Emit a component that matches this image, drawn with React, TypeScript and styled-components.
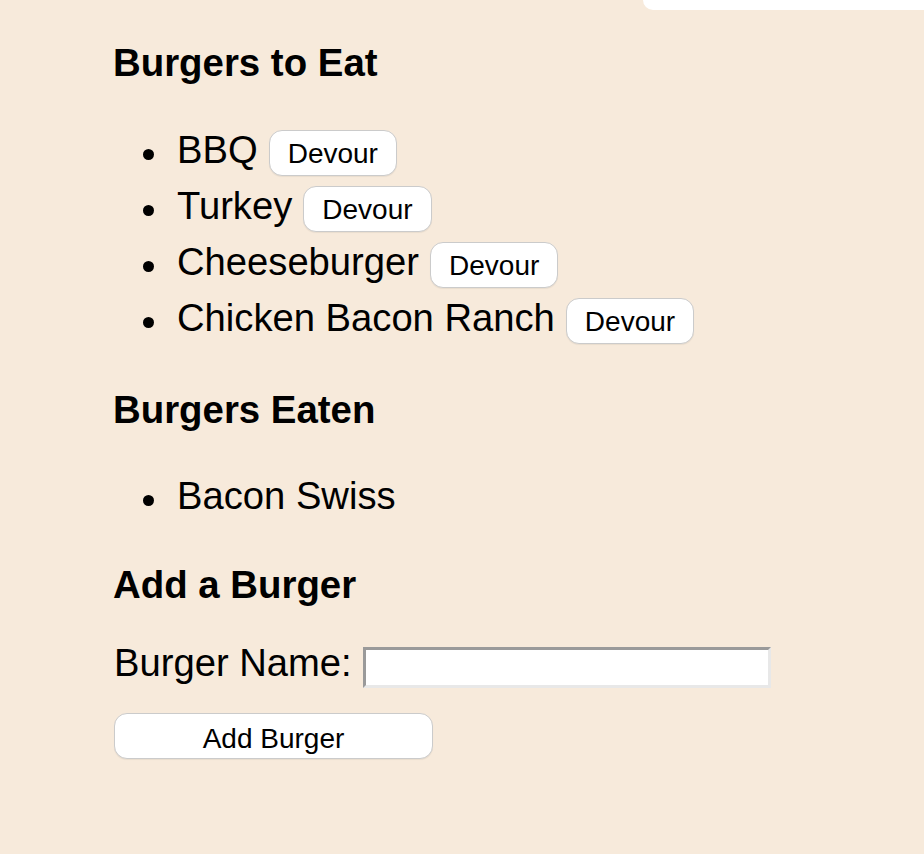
import React from "react";
import styled, { createGlobalStyle } from "styled-components";

const GlobalStyle = createGlobalStyle`
  html, body {
    margin: 0;
    padding: 0;
    background: #f7eadb;
  }
  body {
    font-family: "Liberation Sans", Arial, Helvetica, sans-serif;
    color: #000;
    min-height: 854px;
  }
`;

const Page = styled.div`
  display: flex;
  flex-direction: column;
  min-height: 854px;
`;

const TopTab = styled.div`
  align-self: flex-end;
  width: 281px;
  height: 10px;
  background: #ffffff;
  border-bottom-left-radius: 14px;
`;

const Main = styled.main`
  padding: 31px 0 0 114px;
`;

const Heading = styled.h2`
  margin: 0 0 0 -1px;
  font-size: 38.4px;
  line-height: 44px;
  font-weight: 700;
`;

const List = styled.ul<{ $mt: number; $mb: number }>`
  list-style: none;
  margin: ${(p) => p.$mt}px 0 ${(p) => p.$mb}px;
  padding: 0 0 0 29px;
`;

const Item = styled.li`
  display: flex;
  align-items: baseline;
  height: 56px;
  font-size: 38.2px;
  line-height: 44px;

  &::before {
    content: "";
    align-self: flex-start;
    flex: none;
    width: 11px;
    height: 11px;
    margin-top: 21px;
    margin-right: 23px;
    border-radius: 50%;
    background: #000;
  }
`;

const Name = styled.span`
  margin-right: 11px;
`;

const Button = styled.button<{ $wide?: boolean }>`
  box-sizing: border-box;
  height: 46px;
  width: ${(p) => (p.$wide ? "319px" : "auto")};
  padding: ${(p) => (p.$wide ? "6px 0 0" : "2px 18px 0")};
  font-family: "Liberation Sans", Arial, Helvetica, sans-serif;
  font-size: 28px;
  color: #000;
  background: #ffffff;
  border: 1.5px solid #cbcbcb;
  border-radius: 13px;
  box-shadow: 0 1px 1px rgba(0, 0, 0, 0.06);
  cursor: pointer;
`;

const FormRow = styled.div`
  display: flex;
  align-items: baseline;
  margin: 34px 0 25px;
  font-size: 38.2px;
  line-height: 44px;
`;

const Label = styled.label`
  margin-right: 11px;
`;

const Input = styled.input`
  box-sizing: border-box;
  width: 408px;
  height: 41px;
  padding: 0 6px;
  font-family: "Liberation Sans", Arial, Helvetica, sans-serif;
  font-size: 28px;
  background: #ffffff;
  border-style: solid;
  border-width: 3px;
  border-color: #9a9a9a #e8e8e8 #e8e8e8 #9a9a9a;
  outline: none;
`;

const toEat = ["BBQ", "Turkey", "Cheeseburger", "Chicken Bacon Ranch"];
const eaten = ["Bacon Swiss"];

export default function App() {
  return (
    <>
      <GlobalStyle />
      <Page>
        <TopTab />
        <Main>
          <Heading>Burgers to Eat</Heading>
          <List $mt={43} $mb={36}>
            {toEat.map((b) => (
              <Item key={b}>
                <Name>{b}</Name>
                <Button>Devour</Button>
              </Item>
            ))}
          </List>
          <Heading>Burgers Eaten</Heading>
          <List $mt={42} $mb={33}>
            {eaten.map((b) => (
              <Item key={b}>
                <Name>{b}</Name>
              </Item>
            ))}
          </List>
          <Heading>Add a Burger</Heading>
          <form onSubmit={(e) => e.preventDefault()}>
            <FormRow>
              <Label htmlFor="burger">Burger Name:</Label>
              <Input id="burger" type="text" />
            </FormRow>
            <Button $wide type="submit">
              Add Burger
            </Button>
          </form>
        </Main>
      </Page>
    </>
  );
}
